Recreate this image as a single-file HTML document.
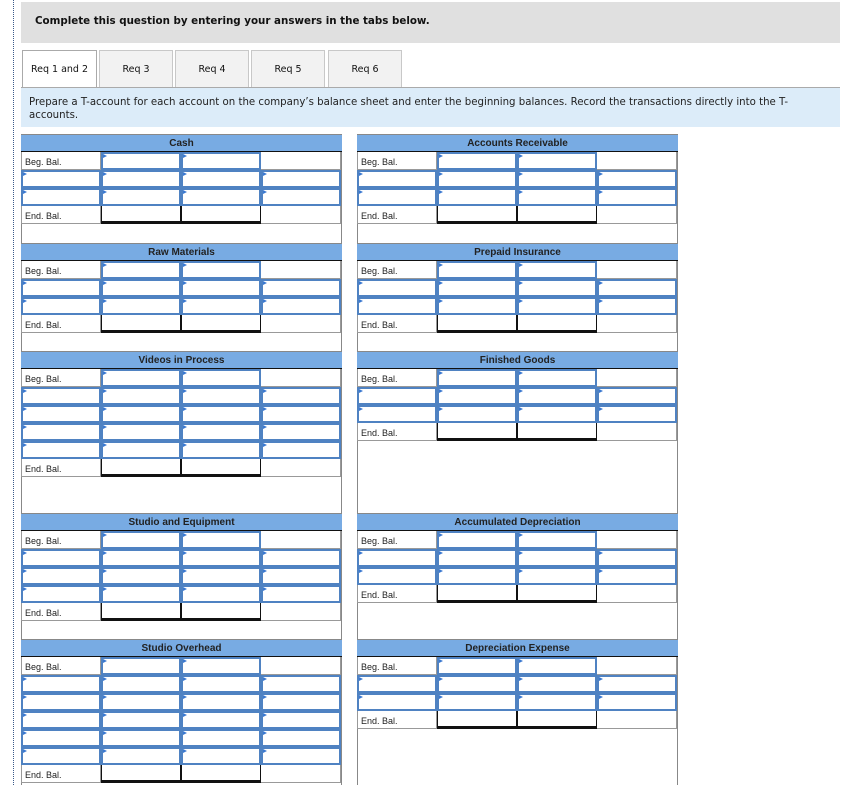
<!DOCTYPE html>
<html><head><meta charset="utf-8"><style>
html,body{margin:0;width:847px;height:785px;overflow:hidden}
body{background:#fff;position:relative;font-family:"Liberation Sans",Arial,sans-serif}
.dot{position:absolute;left:13px;top:0;height:785px;border-left:1px dotted #3a5a8a}
.top{position:absolute;left:21px;top:2px;width:819px;height:41px;background:#e0e0e0;font:bold 10.3px "DejaVu Sans",sans-serif;color:#111}
.top span{position:absolute;left:14px;top:13px}
.tab{position:absolute;top:50px;height:37px;box-sizing:border-box;border:1px solid #c8c8c8;border-bottom:none;background:#f2f2f2;font:9.5px "DejaVu Sans",sans-serif;color:#111;text-align:center;line-height:38px}
.tab.a{background:#fff;border-color:#aaa}
.ins{position:absolute;left:21px;top:87px;width:819px;height:40px;background:#dcecf9;border-top:1px solid #aaa;box-sizing:border-box;font:10.2px "DejaVu Sans",sans-serif;color:#222;padding:8px 0 0 8px;line-height:13px}
.box{position:absolute;top:134px;width:321px;height:651px;border:1px solid #888;border-top:none;border-bottom:none;box-sizing:border-box}
.h{position:absolute;width:321px;height:18px;background:#78abe3;border-top:1px solid #888;border-bottom:1px solid #111;box-sizing:border-box;text-align:center;font:bold 10px "Liberation Sans",sans-serif;color:#222;line-height:18px}
.r{position:absolute;width:321px;height:18px}
.r div{position:absolute;top:0;width:80px;height:18px;box-sizing:border-box}
.r div:nth-child(1){left:0}.r div:nth-child(2){left:80px}.r div:nth-child(3){left:160px}.r div:nth-child(4){left:240px}
.l{border:1px solid #999;border-top:none;font:9px "Liberation Sans",sans-serif;color:#222;padding:5px 0 0 3px}
.e{border-right:1px solid #999;border-bottom:1px solid #999}
.i{border:2px solid #4f82c2;background:#fff}
.i::before{content:"";position:absolute;left:0;top:0;border-left:4px solid #3b79d0;border-top:2px solid transparent;border-bottom:2px solid transparent}
.x{border:1px solid #111;border-bottom:3px solid #111;border-top:none}
</style></head><body>
<div class="dot"></div>
<div class="top"><span>Complete this question by entering your answers in the tabs below.</span></div>
<div class="tab a" style="left:22px;width:75px;height:38px">Req 1 and 2</div>
<div class="tab" style="left:99px;width:74px">Req 3</div>
<div class="tab" style="left:175px;width:74px">Req 4</div>
<div class="tab" style="left:251px;width:74px">Req 5</div>
<div class="tab" style="left:328px;width:74px">Req 6</div>
<div class="ins">Prepare a T-account for each account on the company’s balance sheet and enter the beginning balances. Record the transactions directly into the T-<br>accounts.</div>

<div class="box" style="left:21px"></div>
<div class="box" style="left:357px"></div>

<!-- LEFT -->
<div style="position:absolute;left:21px;top:0">
<div class="h" style="top:134px">Cash</div>
<div class="r" style="top:152px"><div class="l">Beg. Bal.</div><div class="i"></div><div class="i"></div><div class="e"></div></div>
<div class="r" style="top:170px"><div class="i"></div><div class="i"></div><div class="i"></div><div class="i"></div></div>
<div class="r" style="top:188px"><div class="i"></div><div class="i"></div><div class="i"></div><div class="i"></div></div>
<div class="r" style="top:206px"><div class="l">End. Bal.</div><div class="x"></div><div class="x"></div><div class="e"></div></div>

<div class="h" style="top:243px">Raw Materials</div>
<div class="r" style="top:261px"><div class="l">Beg. Bal.</div><div class="i"></div><div class="i"></div><div class="e"></div></div>
<div class="r" style="top:279px"><div class="i"></div><div class="i"></div><div class="i"></div><div class="i"></div></div>
<div class="r" style="top:297px"><div class="i"></div><div class="i"></div><div class="i"></div><div class="i"></div></div>
<div class="r" style="top:315px"><div class="l">End. Bal.</div><div class="x"></div><div class="x"></div><div class="e"></div></div>

<div class="h" style="top:351px">Videos in Process</div>
<div class="r" style="top:369px"><div class="l">Beg. Bal.</div><div class="i"></div><div class="i"></div><div class="e"></div></div>
<div class="r" style="top:387px"><div class="i"></div><div class="i"></div><div class="i"></div><div class="i"></div></div>
<div class="r" style="top:405px"><div class="i"></div><div class="i"></div><div class="i"></div><div class="i"></div></div>
<div class="r" style="top:423px"><div class="i"></div><div class="i"></div><div class="i"></div><div class="i"></div></div>
<div class="r" style="top:441px"><div class="i"></div><div class="i"></div><div class="i"></div><div class="i"></div></div>
<div class="r" style="top:459px"><div class="l">End. Bal.</div><div class="x"></div><div class="x"></div><div class="e"></div></div>

<div class="h" style="top:513px">Studio and Equipment</div>
<div class="r" style="top:531px"><div class="l">Beg. Bal.</div><div class="i"></div><div class="i"></div><div class="e"></div></div>
<div class="r" style="top:549px"><div class="i"></div><div class="i"></div><div class="i"></div><div class="i"></div></div>
<div class="r" style="top:567px"><div class="i"></div><div class="i"></div><div class="i"></div><div class="i"></div></div>
<div class="r" style="top:585px"><div class="i"></div><div class="i"></div><div class="i"></div><div class="i"></div></div>
<div class="r" style="top:603px"><div class="l">End. Bal.</div><div class="x"></div><div class="x"></div><div class="e"></div></div>

<div class="h" style="top:639px">Studio Overhead</div>
<div class="r" style="top:657px"><div class="l">Beg. Bal.</div><div class="i"></div><div class="i"></div><div class="e"></div></div>
<div class="r" style="top:675px"><div class="i"></div><div class="i"></div><div class="i"></div><div class="i"></div></div>
<div class="r" style="top:693px"><div class="i"></div><div class="i"></div><div class="i"></div><div class="i"></div></div>
<div class="r" style="top:711px"><div class="i"></div><div class="i"></div><div class="i"></div><div class="i"></div></div>
<div class="r" style="top:729px"><div class="i"></div><div class="i"></div><div class="i"></div><div class="i"></div></div>
<div class="r" style="top:747px"><div class="i"></div><div class="i"></div><div class="i"></div><div class="i"></div></div>
<div class="r" style="top:765px"><div class="l">End. Bal.</div><div class="x"></div><div class="x"></div><div class="e"></div></div>
</div>

<!-- RIGHT -->
<div style="position:absolute;left:357px;top:0">
<div class="h" style="top:134px">Accounts Receivable</div>
<div class="r" style="top:152px"><div class="l">Beg. Bal.</div><div class="i"></div><div class="i"></div><div class="e"></div></div>
<div class="r" style="top:170px"><div class="i"></div><div class="i"></div><div class="i"></div><div class="i"></div></div>
<div class="r" style="top:188px"><div class="i"></div><div class="i"></div><div class="i"></div><div class="i"></div></div>
<div class="r" style="top:206px"><div class="l">End. Bal.</div><div class="x"></div><div class="x"></div><div class="e"></div></div>

<div class="h" style="top:243px">Prepaid Insurance</div>
<div class="r" style="top:261px"><div class="l">Beg. Bal.</div><div class="i"></div><div class="i"></div><div class="e"></div></div>
<div class="r" style="top:279px"><div class="i"></div><div class="i"></div><div class="i"></div><div class="i"></div></div>
<div class="r" style="top:297px"><div class="i"></div><div class="i"></div><div class="i"></div><div class="i"></div></div>
<div class="r" style="top:315px"><div class="l">End. Bal.</div><div class="x"></div><div class="x"></div><div class="e"></div></div>

<div class="h" style="top:351px">Finished Goods</div>
<div class="r" style="top:369px"><div class="l">Beg. Bal.</div><div class="i"></div><div class="i"></div><div class="e"></div></div>
<div class="r" style="top:387px"><div class="i"></div><div class="i"></div><div class="i"></div><div class="i"></div></div>
<div class="r" style="top:405px"><div class="i"></div><div class="i"></div><div class="i"></div><div class="i"></div></div>
<div class="r" style="top:423px"><div class="l">End. Bal.</div><div class="x"></div><div class="x"></div><div class="e"></div></div>

<div class="h" style="top:513px">Accumulated Depreciation</div>
<div class="r" style="top:531px"><div class="l">Beg. Bal.</div><div class="i"></div><div class="i"></div><div class="e"></div></div>
<div class="r" style="top:549px"><div class="i"></div><div class="i"></div><div class="i"></div><div class="i"></div></div>
<div class="r" style="top:567px"><div class="i"></div><div class="i"></div><div class="i"></div><div class="i"></div></div>
<div class="r" style="top:585px"><div class="l">End. Bal.</div><div class="x"></div><div class="x"></div><div class="e"></div></div>

<div class="h" style="top:639px">Depreciation Expense</div>
<div class="r" style="top:657px"><div class="l">Beg. Bal.</div><div class="i"></div><div class="i"></div><div class="e"></div></div>
<div class="r" style="top:675px"><div class="i"></div><div class="i"></div><div class="i"></div><div class="i"></div></div>
<div class="r" style="top:693px"><div class="i"></div><div class="i"></div><div class="i"></div><div class="i"></div></div>
<div class="r" style="top:711px"><div class="l">End. Bal.</div><div class="x"></div><div class="x"></div><div class="e"></div></div>
</div>
</body></html>
